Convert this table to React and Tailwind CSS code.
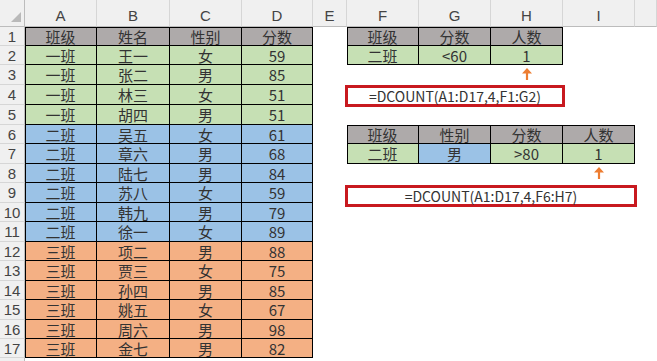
import React from "react";

const GRAY = "bg-[#aeaaaa]";
const GREEN = "bg-[#c6e0b4]";
const BLUE = "bg-[#9bc2e6]";
const ORANGE = "bg-[#f4b084]";

const data = [
  ["班级", "姓名", "性别", "分数"],
  ["一班", "王一", "女", "59"],
  ["一班", "张二", "男", "85"],
  ["一班", "林三", "女", "51"],
  ["一班", "胡四", "男", "51"],
  ["二班", "吴五", "女", "61"],
  ["二班", "章六", "男", "68"],
  ["二班", "陆七", "男", "84"],
  ["二班", "苏八", "女", "59"],
  ["二班", "韩九", "男", "79"],
  ["二班", "徐一", "女", "89"],
  ["三班", "项二", "男", "88"],
  ["三班", "贾三", "女", "75"],
  ["三班", "孙四", "男", "85"],
  ["三班", "姚五", "女", "67"],
  ["三班", "周六", "男", "98"],
  ["三班", "金七", "男", "82"],
];

function bgFor(r) {
  if (r === 0) return GRAY;
  if (r <= 4) return GREEN;
  if (r <= 10) return BLUE;
  return ORANGE;
}

function Cell({ text, bg, top, left }) {
  let sh = "";
  if (top && left) sh = "shadow-[inset_1px_1px_0_#000]";
  else if (top) sh = "shadow-[inset_0_1px_0_#000]";
  else if (left) sh = "shadow-[inset_1px_0_0_#000]";
  return (
    <div className={`flex items-center justify-center border-r border-b border-black ${bg} ${sh}`}>
      <span className="leading-none">{text}</span>
    </div>
  );
}

function Empty() {
  return <div />;
}

function Arrow() {
  return (
    <svg width="10" height="12" viewBox="0 0 10 12">
      <polygon points="5,0 10,5.5 6.1,5.5 6.1,12 3.9,12 3.9,5.5 0,5.5" fill="#ed7d31" />
    </svg>
  );
}

function RedBox({ text }) {
  return (
    <div className="relative z-10 h-[22px] -mx-[2px] border-[3px] border-[#c8191f] bg-white flex items-center justify-center text-[14px] leading-none text-[#333]">
      {text}
    </div>
  );
}

function rightCells(r) {
  const E = <Empty key="e" />;
  const J = <Empty key="j" />;
  switch (r) {
    case 1:
      return [
        E,
        <Cell key="f" text="班级" bg={GRAY} top left />,
        <Cell key="g" text="分数" bg={GRAY} top />,
        <Cell key="h" text="人数" bg={GRAY} top />,
        <Empty key="i" />,
        J,
      ];
    case 2:
      return [
        E,
        <Cell key="f" text="二班" bg={GREEN} left />,
        <Cell key="g" text="<60" bg={GREEN} />,
        <Cell key="h" text="1" bg={GREEN} />,
        <Empty key="i" />,
        J,
      ];
    case 3:
      return [
        E,
        <Empty key="f" />,
        <Empty key="g" />,
        <div key="h" className="flex justify-center pt-[3px]">
          <Arrow />
        </div>,
        <Empty key="i" />,
        J,
      ];
    case 4:
      return [
        E,
        <div key="box" className="col-span-3">
          <RedBox text="=DCOUNT(A1:D17,4,F1:G2)" />
        </div>,
        <Empty key="i" />,
        J,
      ];
    case 6:
      return [
        E,
        <Cell key="f" text="班级" bg={GRAY} top left />,
        <Cell key="g" text="性别" bg={GRAY} top />,
        <Cell key="h" text="分数" bg={GRAY} top />,
        <Cell key="i" text="人数" bg={GRAY} top />,
        J,
      ];
    case 7:
      return [
        E,
        <Cell key="f" text="二班" bg={GREEN} left />,
        <Cell key="g" text="男" bg={BLUE} />,
        <Cell key="h" text=">80" bg={GREEN} />,
        <Cell key="i" text="1" bg={GREEN} />,
        J,
      ];
    case 8:
      return [
        E,
        <Empty key="f" />,
        <Empty key="g" />,
        <Empty key="h" />,
        <div key="i" className="flex justify-center pt-[3px]">
          <Arrow />
        </div>,
        J,
      ];
    case 9:
      return [
        E,
        <div key="box" className="col-span-4 pt-[2px]">
          <RedBox text="=DCOUNT(A1:D17,4,F6:H7)" />
        </div>,
        J,
      ];
    default:
      return [
        E,
        <Empty key="f" />,
        <Empty key="g" />,
        <Empty key="h" />,
        <Empty key="i" />,
        J,
      ];
  }
}

const cols = ["A", "B", "C", "D", "E", "F", "G", "H", "I", ""];
const HDR = { fontFamily: '"Liberation Sans", Arial, sans-serif' };

export default function App() {
  return (
    <div
      className="w-[657px] h-[361px] overflow-hidden bg-white text-[15px] text-[#333] grid grid-cols-[25px_72px_73px_72px_71px_34px_72px_72px_72px_72px_1fr] grid-rows-[27px_19px_19px_20px_20px_20px_19px_20px_19px_20px_19px_20px_19px_20px_19px_20px_19px_19px_1fr]"
      style={{ fontFamily: '"Noto Sans CJK SC", "Noto Sans", sans-serif' }}
    >
      <div className="relative bg-[#f0f0f0] border-r border-b border-[#bcbcbc]">
        <svg className="absolute right-[3px] bottom-[4px]" width="10" height="10" viewBox="0 0 10 10">
          <polygon points="10,0 10,10 0,10" fill="#b9b9b9" />
        </svg>
      </div>
      {cols.map((c, i) => (
        <div
          key={"h" + i}
          style={HDR}
          className="flex items-end justify-center pb-[3px] bg-[#f0f0f0] border-r border-b border-r-[#d6d6d6] border-b-[#bcbcbc] text-[#444] text-[15px] leading-none"
        >
          {c}
        </div>
      ))}
      {data.map((row, r) => (
        <React.Fragment key={"r" + r}>
          <div
            style={HDR}
            className="flex items-center justify-center bg-[#f0f0f0] border-r border-b border-r-[#bcbcbc] border-b-[#d6d6d6] text-[#444] text-[15px] leading-none"
          >
            {r + 1}
          </div>
          {row.map((t, c) => (
            <Cell key={c} text={t} bg={bgFor(r)} top={r === 0} left={c === 0} />
          ))}
          {rightCells(r + 1)}
        </React.Fragment>
      ))}
      <div className="bg-[#f0f0f0] border-r border-[#bcbcbc]" />
      <div className="col-span-10" />
    </div>
  );
}
